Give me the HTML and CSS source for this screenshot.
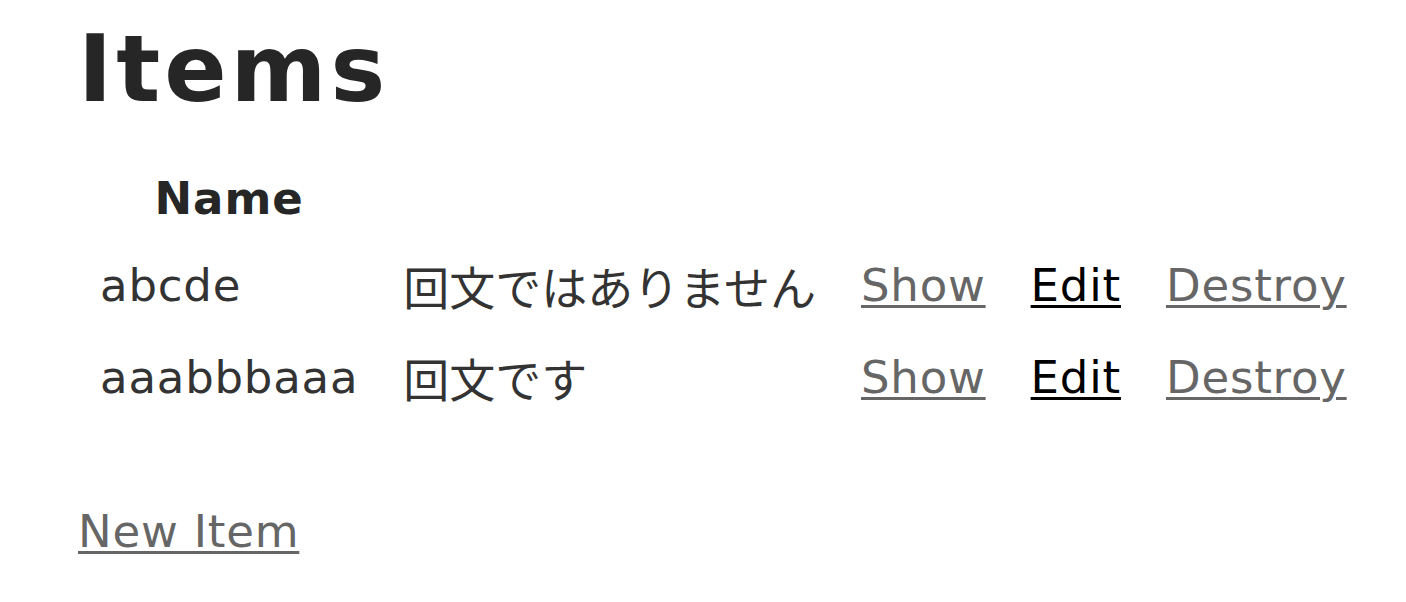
FILE: index.html
```html
<!DOCTYPE html>
<html lang="ja">
<head>
<meta charset="utf-8">
<title>Items</title>
<link rel="stylesheet" href="styles.css">
</head>
<body>
<h1 class="title">Items</h1>
<table class="items">
  <thead>
    <tr>
      <th>Name</th>
      <th colspan="4"></th>
    </tr>
  </thead>
  <tbody>
    <tr>
      <td>abcde</td>
      <td class="ja">回文ではありません</td>
      <td><a class="visited" href="#">Show</a></td>
      <td><a class="plain" href="#">Edit</a></td>
      <td><a class="visited" href="#">Destroy</a></td>
    </tr>
    <tr>
      <td>aaabbbaaa</td>
      <td class="ja">回文です</td>
      <td><a class="visited" href="#">Show</a></td>
      <td><a class="plain" href="#">Edit</a></td>
      <td><a class="visited" href="#">Destroy</a></td>
    </tr>
  </tbody>
</table>
<p class="new"><a class="visited" href="#">New Item</a></p>
</body>
</html>
```
FILE: styles.css
```css
html, body {
  margin: 0;
  background: #fff;
}
body {
  padding: 15px 0 0 78px;
  color: #333;
  font-family: "DejaVu Sans", Verdana, "Noto Sans CJK JP", sans-serif;
  font-size: 45px;
  line-height: 61px;
  letter-spacing: 0.8px;
}
.title {
  margin: 0;
  font-size: 92px;
  line-height: 110px;
  font-weight: bold;
  color: #262626;
  letter-spacing: 4px;
}
.items {
  margin-top: 36px;
  border-collapse: separate;
  border-spacing: 7px;
  margin-left: -4px;
}
.items th {
  padding: 0 0 19px 0;
  font-weight: bold;
  text-align: center;
  color: #262626;
  letter-spacing: 1px;
}
.items td {
  padding: 0 19px 24px 19px;
  white-space: nowrap;
}
.items td.ja {
  font-family: "Noto Sans CJK JP", sans-serif;
  font-size: 46px;
  letter-spacing: 0;
}
a {
  text-decoration: underline;
  text-decoration-thickness: 3px;
  text-underline-offset: 4px;
}
a.visited { color: #666; }
a.plain { color: #000; }
.new {
  margin: 62px 0 0 0;
}
```
